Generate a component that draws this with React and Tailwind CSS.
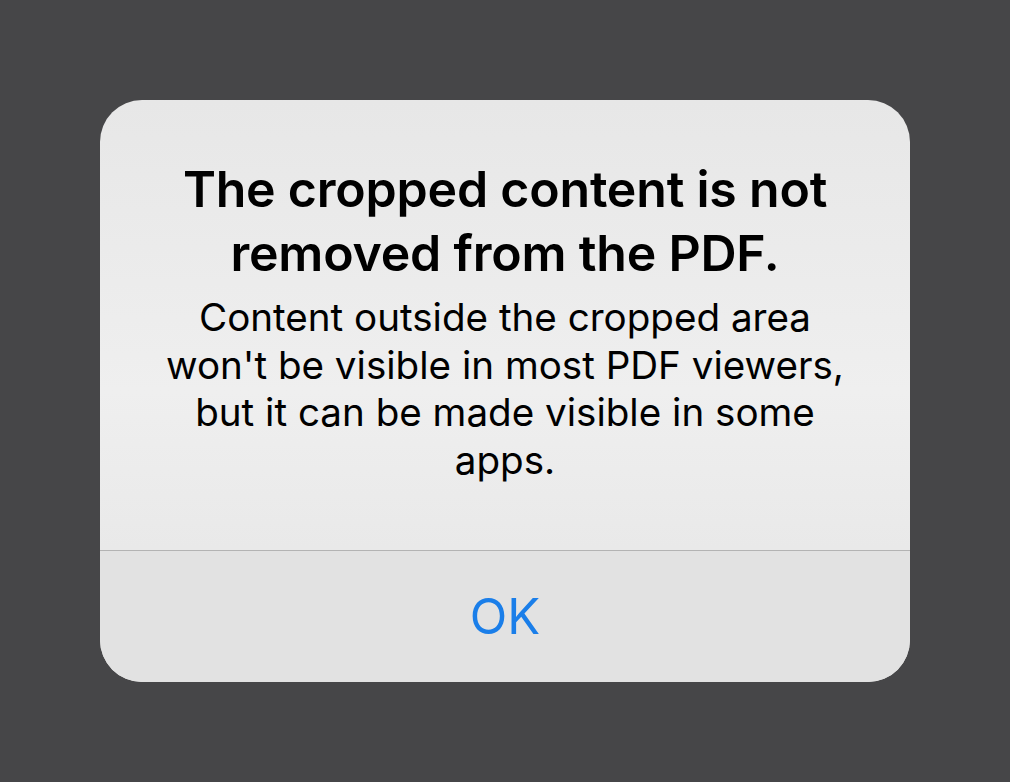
export default function App() {
  return (
    <div
      className="w-[1010px] h-[782px] bg-[#464648] flex items-start justify-center pt-[100px]"
      style={{ fontFamily: "Inter, 'Noto Sans', sans-serif" }}
    >
      <div className="w-[810px] h-[582px] rounded-[42px] overflow-hidden flex flex-col bg-gradient-to-b from-[#e7e7e7] via-[#efefef] to-[#e4e4e4]">
        <div className="h-[450px] flex flex-col items-center text-center pt-[57px]">
          <h1 className="text-[50px] leading-[64px] font-semibold text-black tracking-[-0.2px]">
            The cropped content is not
            <br />
            removed from the PDF.
          </h1>
          <p className="mt-[9px] text-[38.6px] leading-[47.5px] text-black">
            Content outside the cropped area
            <br />
            won't be visible in most PDF viewers,
            <br />
            but it can be made visible in some
            <br />
            apps.
          </p>
        </div>
        <div className="h-px bg-[#b3b3b3]" />
        <button className="flex-1 flex items-center justify-center text-[49px] text-[#1a7ee9] bg-[#e2e2e2]">
          OK
        </button>
      </div>
    </div>
  );
}
